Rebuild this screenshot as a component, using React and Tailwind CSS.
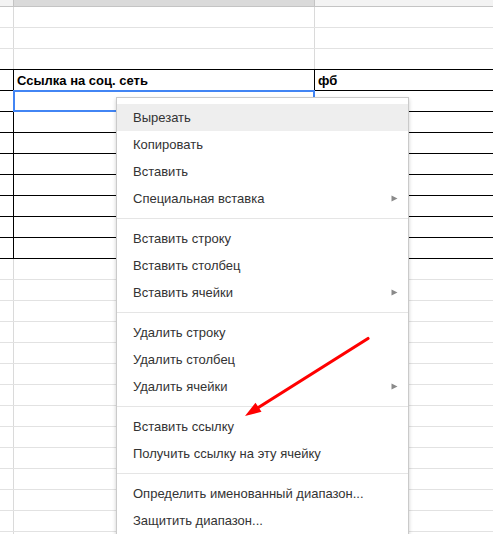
import React from "react";

const menuGroups = [
  [
    { label: "Вырезать", active: true },
    { label: "Копировать" },
    { label: "Вставить" },
    { label: "Специальная вставка", sub: true },
  ],
  [
    { label: "Вставить строку" },
    { label: "Вставить столбец" },
    { label: "Вставить ячейки", sub: true },
  ],
  [
    { label: "Удалить строку" },
    { label: "Удалить столбец" },
    { label: "Удалить ячейки", sub: true },
  ],
  [{ label: "Вставить ссылку" }, { label: "Получить ссылку на эту ячейку" }],
  [{ label: "Определить именованный диапазон..." }, { label: "Защитить диапазон..." }],
];

function SubArrow() {
  return (
    <svg width="7" height="7" viewBox="0 0 7 7" className="shrink-0">
      <polygon points="0.5,0.5 6.5,3.5 0.5,6.5" fill="#8a8a8a" />
    </svg>
  );
}

function ContextMenu() {
  return (
    <div className="absolute left-[116px] top-[97px] z-10 w-[293px] bg-white border border-[#cacaca] py-[6px] shadow-[0_2px_4px_rgba(0,0,0,0.2)]">
      {menuGroups.map((group, gi) => (
        <div key={gi}>
          {gi > 0 && <div className="my-[6px] h-px bg-[#e5e5e5]" />}
          {group.map((item) => (
            <div
              key={item.label}
              className={`flex items-center justify-between h-[27px] pl-[16px] pr-[10px] text-[13px] leading-[27px] text-[#333] ${
                item.active ? "bg-[#eeeeee]" : ""
              }`}
            >
              <span>{item.label}</span>
              {item.sub && <SubArrow />}
            </div>
          ))}
        </div>
      ))}
    </div>
  );
}

function Grid() {
  const rows = Array.from({ length: 26 }, (_, i) => i);
  return (
    <div>
      {/* column headers */}
      <div className="flex h-[7px] border-b border-[#c4c4c4]">
        <div className="w-[14px] bg-[#f3f3f3] border-r border-[#c4c4c4]" />
        <div className="w-[301px] bg-[#dadada] border-r border-[#c4c4c4]" />
        <div className="flex-1 bg-[#f3f3f3]" />
      </div>

      {rows.map((i) => {
        const dark = i >= 3 && i <= 11;
        const darkBottom = i >= 2 && i <= 11;
        return (
          <div
            key={i}
            className={`flex h-[21px] border-b ${
              darkBottom ? "border-black" : "border-[#e2e2e2]"
            }`}
          >
            <div
              className={`w-[14px] border-r ${
                dark ? "border-black" : "border-[#dadada]"
              }`}
            />
            <div
              className={`relative w-[301px] border-r pl-[3px] pt-px text-[13px] leading-[19px] text-black ${
                dark ? "border-black" : "border-[#dadada]"
              }`}
            >
              {i === 3 && <span className="font-bold">Ссылка на соц. сеть</span>}
              {i === 4 && (
                <div className="absolute -left-px -top-px z-[5] w-[302px] h-[22px] border-2 border-[#4285f4]" />
              )}
            </div>
            <div className="flex-1 pl-[3px] pt-px text-[13px] leading-[19px] text-black">
              {i === 3 && <span className="font-bold">фб</span>}
            </div>
          </div>
        );
      })}
    </div>
  );
}

function RedArrow() {
  return (
    <svg
      className="absolute inset-0 z-20 pointer-events-none"
      width="493"
      height="534"
      viewBox="0 0 493 534"
    >
      <line x1="368" y1="338.5" x2="256" y2="409" stroke="#ff0000" strokeWidth="3.2" strokeLinecap="round" />
      <polygon points="245,416 261.5,411.8 255.5,402.8" fill="#ff0000" />
    </svg>
  );
}

export default function App() {
  return (
    <div
      className="relative h-[534px] w-[493px] overflow-hidden bg-white"
      style={{ fontFamily: '"Liberation Sans", Arial, sans-serif' }}
    >
      <Grid />
      <ContextMenu />
      <RedArrow />
    </div>
  );
}
